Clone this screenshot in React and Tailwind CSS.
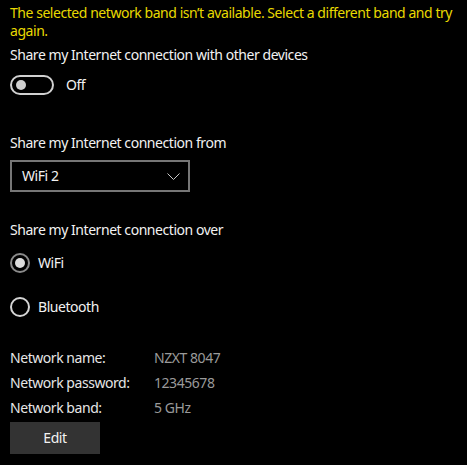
import React from "react";

export default function App() {
  const font = { fontFamily: '"Noto Sans", "Open Sans", sans-serif' };
  return (
    <div className="w-[467px] h-[465px] bg-black text-white text-[14px] tracking-[-0.45px] overflow-hidden pl-[10px]" style={font}>
      <div className="pt-[4px] leading-[18px] text-[#e8d900] whitespace-nowrap">
        The selected network band isn’t available. Select a different band and try
        <br />
        again.
      </div>

      <div className="mt-[5px] leading-[20px] text-[#f2f2f2]">Share my Internet connection with other devices</div>

      <div className="mt-[10px] flex items-center h-[20px]">
        <div className="w-[44px] h-[20px] rounded-full border-2 border-[#d0d0d0] flex items-center">
          <div className="ml-[4px] w-[10px] h-[10px] rounded-full bg-[#d0d0d0]" />
        </div>
        <span className="ml-[12px] leading-[20px] text-[#f2f2f2]">Off</span>
      </div>

      <div className="mt-[38px] leading-[20px] text-[#f2f2f2]">Share my Internet connection from</div>

      <div className="mt-[7px] w-[180px] h-[32px] border-2 border-[#767676] flex items-center justify-between pl-[10px] pr-[8px]">
        <span className="leading-[20px] text-[#f2f2f2]">WiFi 2</span>
        <svg width="13" height="7" viewBox="0 0 13 7" fill="none">
          <path d="M0.5 0.5 L6.5 6.5 L12.5 0.5" stroke="#c8c8c8" strokeWidth="1" />
        </svg>
      </div>

      <div className="mt-[28px] leading-[20px] text-[#f2f2f2]">Share my Internet connection over</div>

      <div className="mt-[13px] flex items-center h-[20px]">
        <div className="w-[20px] h-[20px] rounded-full border-2 border-[#8a8a8a] flex items-center justify-center">
          <div className="w-[10px] h-[10px] rounded-full bg-[#dcdcdc]" />
        </div>
        <span className="ml-[8px] leading-[20px] text-[#f2f2f2]">WiFi</span>
      </div>

      <div className="mt-[24px] flex items-center h-[20px]">
        <div className="w-[20px] h-[20px] rounded-full border-2 border-[#d4d4d4]" />
        <span className="ml-[8px] leading-[20px] text-[#f2f2f2]">Bluetooth</span>
      </div>

      <div className="mt-[28px] grid grid-cols-[144px_1fr] leading-[25px]">
        <span className="text-[#e6e6e6]">Network name:</span>
        <span className="text-[#9a9a9a]">NZXT 8047</span>
        <span className="text-[#e6e6e6]">Network password:</span>
        <span className="text-[#9a9a9a]">12345678</span>
        <span className="text-[#e6e6e6]">Network band:</span>
        <span className="text-[#9a9a9a]">5 GHz</span>
      </div>

      <div className="mt-[2px] w-[90px] h-[32px] bg-[#333333] flex items-center justify-center">
        <span className="leading-[20px] text-[#f2f2f2]">Edit</span>
      </div>
    </div>
  );
}
